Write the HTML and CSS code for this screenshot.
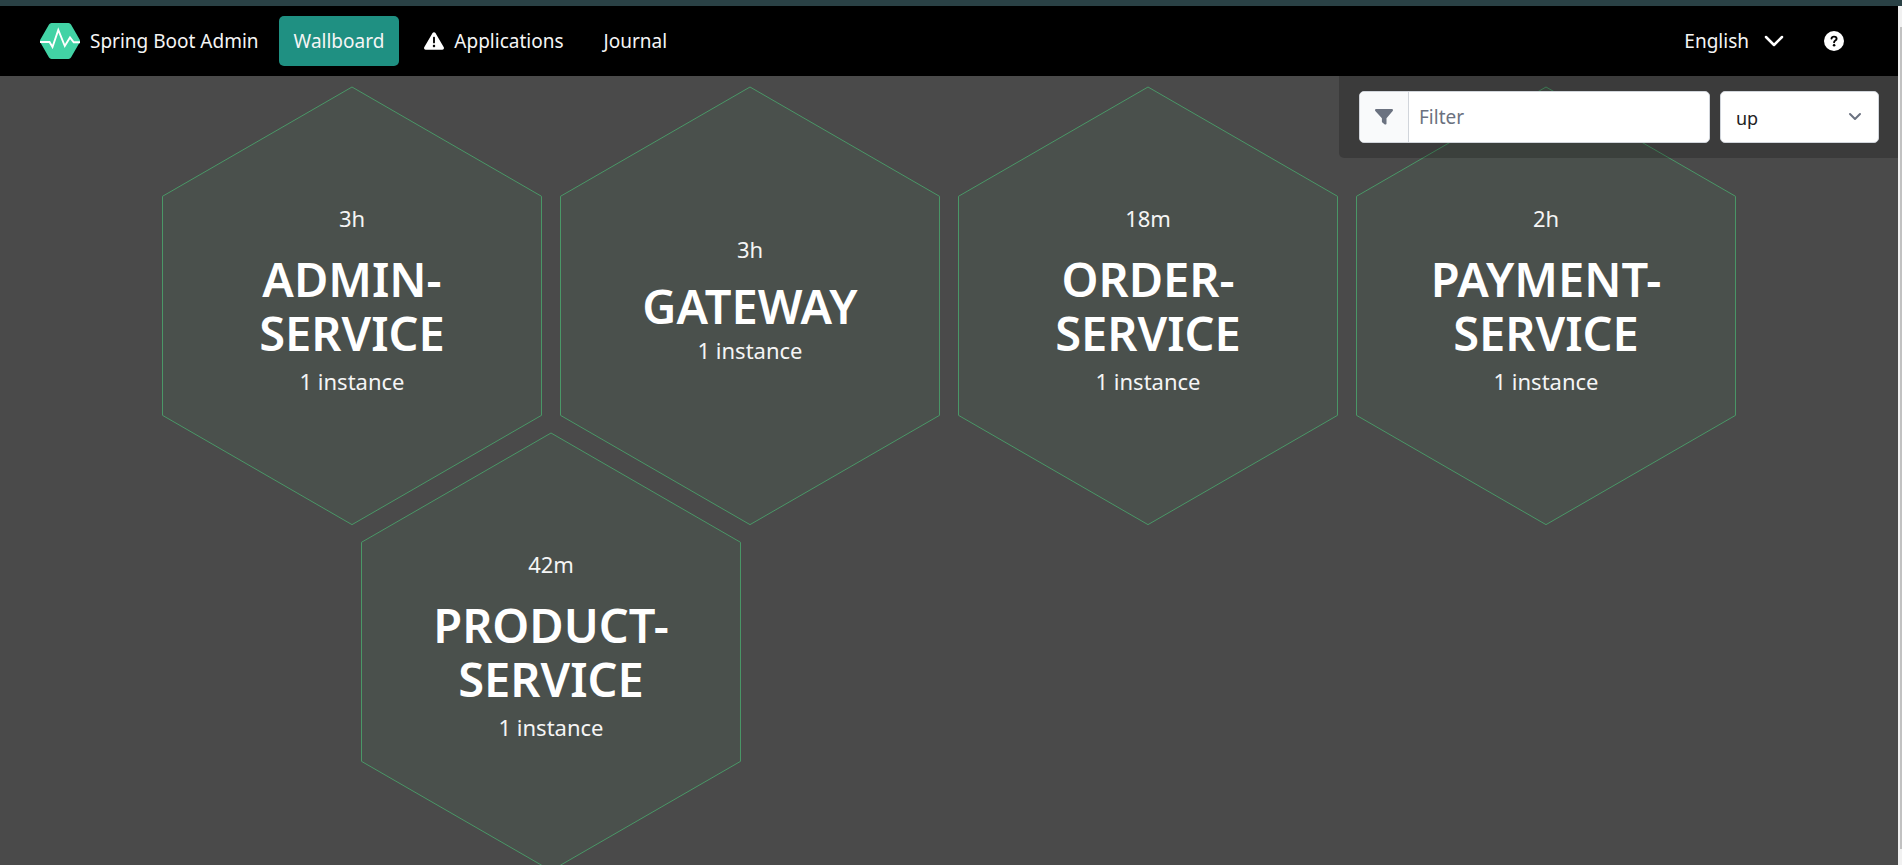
FILE: index.html
```html
<!DOCTYPE html>
<html lang="en">
<head>
<meta charset="utf-8">
<title>Spring Boot Admin</title>
<link rel="stylesheet" href="styles.css">
</head>
<body>
<svg class="defs" aria-hidden="true">
  <symbol id="hexagon" viewBox="0 0 379 438"><path d="M189.500 1 378.500 110V328.500L189.500 437.500 .5 328.500V110Z" vector-effect="non-scaling-stroke"/></symbol>
</svg>
<div class="window">
  <div class="page">
    <header class="navbar">
      <a class="brand" href="#">
        <svg class="brand-logo" viewBox="0 0 40 36" aria-hidden="true">
          <path d="M11.500 0h17a3 3 0 0 1 2.500 1.500l8.600 15a3 3 0 0 1 0 3l-8.600 15a3 3 0 0 1-2.500 1.500h-17A3 3 0 0 1 9 34.500l-8.600-15a3 3 0 0 1 0-3L9 1.500A3 3 0 0 1 11.500 0Z" fill="#42d3a5"/>
          <path d="M0 19h9.500l3 5L18.300 7l6.500 16 5.200-8.500 3.700 4.800H40" fill="none" stroke="#fff" stroke-width="1.900"/>
        </svg>
        <span>Spring Boot Admin</span>
      </a>
      <nav class="menu">
        <a class="menu-item menu-item--active" href="#">Wallboard</a>
        <a class="menu-item" href="#">
          <svg class="icon" viewBox="0 0 512 512" aria-hidden="true"><path fill="currentColor" d="M506.300 417 293 53c-16.300-28-57.700-28-74 0L5.800 417c-16.400 27.900 4.200 63 36.900 63h426.600c32.700 0 53.300-35 37-63ZM232 168c0-13.300 10.700-24 24-24s24 10.700 24 24v128c0 13.300-10.700 24-24 24s-24-10.700-24-24V168Zm24 248c-17.400 0-31.400-14-31.400-31.400s14-31.400 31.400-31.400 31.400 14 31.400 31.400S273.400 416 256 416Z"/></svg>
          <span>Applications</span>
        </a>
        <a class="menu-item" href="#">Journal</a>
      </nav>
      <div class="menu menu--end">
        <button class="menu-item menu-item--language" type="button">
          <span>English</span>
          <svg class="icon" viewBox="0 0 20 20" aria-hidden="true"><path d="m2 6 8 8 8-8" fill="none" stroke="currentColor" stroke-width="2.500" stroke-linecap="round" stroke-linejoin="round"/></svg>
        </button>
        <a class="menu-item" href="#" aria-label="Help">
          <svg class="icon" viewBox="0 0 20 20" aria-hidden="true"><circle cx="10" cy="10" r="10" fill="currentColor"/><path d="M7.500 7.600C7.700 6.300 8.700 5.600 10 5.600c1.500 0 2.600.8 2.600 2.100 0 1.900-2.500 1.800-2.500 3.500" fill="none" stroke="#000" stroke-width="1.900" stroke-linecap="round"/><circle cx="10.100" cy="14.200" r="1.300"/></svg>
        </a>
      </div>
    </header>
    <main class="wallboard">
      <form class="filters">
        <div class="search">
          <label class="search-label" for="filter" aria-label="Filter">
            <svg class="search-icon" viewBox="0 0 18 16" aria-hidden="true"><path d="M1.200 0h15.600c1 0 1.500 1.200.9 2L11.500 9.300v5.300c0 .9-1 1.300-1.700.8l-2.400-1.800a1 1 0 0 1-.5-.9V9.300L.3 2C-.3 1.200.2 0 1.200 0Z" fill="currentColor"/></svg>
          </label>
          <input class="search-input" id="filter" type="text" placeholder="Filter">
        </div>
        <select class="status" aria-label="Status">
          <option>up</option>
        </select>
        <svg class="status-arrow" viewBox="0 0 14 10" aria-hidden="true"><path d="m2 2 5 5 5-5" fill="none" stroke="currentColor" stroke-width="2" stroke-linecap="round" stroke-linejoin="round"/></svg>
      </form>
      <div class="hexes">
        <article class="hex">
          <svg class="hex-shape" aria-hidden="true"><use href="#hexagon"/></svg>
          <div class="hex-body"><span class="hex-time">3h</span><h1 class="hex-name hex-name--wrapped">ADMIN-SERVICE</h1><span class="hex-count">1 instance</span></div>
        </article>
        <article class="hex">
          <svg class="hex-shape" aria-hidden="true"><use href="#hexagon"/></svg>
          <div class="hex-body"><span class="hex-time">3h</span><h1 class="hex-name">GATEWAY</h1><span class="hex-count">1 instance</span></div>
        </article>
        <article class="hex">
          <svg class="hex-shape" aria-hidden="true"><use href="#hexagon"/></svg>
          <div class="hex-body"><span class="hex-time">18m</span><h1 class="hex-name hex-name--wrapped">ORDER-SERVICE</h1><span class="hex-count">1 instance</span></div>
        </article>
        <article class="hex">
          <svg class="hex-shape" aria-hidden="true"><use href="#hexagon"/></svg>
          <div class="hex-body"><span class="hex-time">2h</span><h1 class="hex-name hex-name--wrapped">PAYMENT-SERVICE</h1><span class="hex-count">1 instance</span></div>
        </article>
        <article class="hex hex--shifted">
          <svg class="hex-shape" aria-hidden="true"><use href="#hexagon"/></svg>
          <div class="hex-body"><span class="hex-time">42m</span><h1 class="hex-name hex-name--wrapped">PRODUCT-SERVICE</h1><span class="hex-count">1 instance</span></div>
        </article>
      </div>
    </main>
  </div>
  <div class="scrollbar"><div class="scrollbar-thumb"></div></div>
</div>
</body>
</html>
```
FILE: styles.css
```css
* { box-sizing: border-box; }

body {
  margin: 0;
  height: 100vh;
  overflow: hidden;
  border-top: 6px solid #2a4145;
  background: #4a4a4a;
  font-family: "Segoe UI", "Noto Sans", sans-serif;
  font-size: 19px;
  line-height: 30px;
  color: #f5f5f5;
}

.defs { display: none; }

.window { display: flex; height: 100%; }

.page {
  flex: 1;
  display: flex;
  flex-direction: column;
  min-width: 0;
  overflow: hidden;
}

.scrollbar {
  width: 4px;
  padding: 21px 0 16px 2px;
  background: #f1f1f1;
}
.scrollbar-thumb { height: 100%; background: #c1c1c1; }

/* Navigation */
.navbar {
  display: flex;
  align-items: center;
  gap: 20px;
  flex: none;
  padding: 10px 39px 10px 40px;
  background: #000;
}
.brand {
  display: flex;
  align-items: center;
  gap: 10px;
  color: inherit;
  text-decoration: none;
}
.brand-logo { width: 40px; height: 36px; }
.menu { display: flex; gap: 10px; }
.menu--end { margin-left: auto; }
.menu-item {
  display: flex;
  align-items: center;
  gap: 10px;
  padding: 10px 15px;
  border: 0;
  border-radius: 5px;
  background: none;
  font: inherit;
  color: inherit;
  text-decoration: none;
}
.menu-item--active { background: #1f9082; }
.menu-item--language { gap: 15px; }
.icon { width: 20px; height: 20px; color: #fff; }

/* Filter bar, floating over the hexagons */
.wallboard { position: relative; flex: 1; min-height: 0; }
.filters {
  position: absolute;
  top: 0;
  right: 0;
  z-index: 1;
  display: flex;
  align-items: center;
  gap: 10px;
  padding: 15px 19px 15px 20px;
  border-radius: 0 0 0 5px;
  background: rgba(0, 0, 0, .2);
}
.search {
  display: flex;
  height: 52px;
  border: 1px solid #d1d5db;
  border-radius: 5px;
  background: #fff;
  overflow: hidden;
}
.search-label {
  display: flex;
  align-items: center;
  padding: 0 15px;
  border-right: 1px solid #d1d5db;
  background: #f9fafb;
  color: #6b7280;
}
.search-icon { width: 18px; height: 16px; }
.search-input {
  width: 300px;
  padding: 0 10px;
  border: 0;
  background: none;
  font: inherit;
  color: #000;
}
.search-input::placeholder { color: #6b7280; }
.status {
  appearance: none;
  width: 159px;
  height: 52px;
  padding: 2px 15px 0;
  border: 1px solid #d1d5db;
  border-radius: 5px;
  background: #fff;
  font: inherit;
  font-size: 18px;
  color: #222;
}
.status-arrow {
  position: absolute;
  right: 36px;
  width: 14px;
  height: 10px;
  color: #6b7280;
  pointer-events: none;
}

/* Honeycomb */
.hexes {
  display: grid;
  grid-template-columns: repeat(8, 1fr);
  width: 84%;
  max-width: 1592px;
  margin: 0 auto;
  padding-top: 10px;
}
.hex {
  grid-column: span 2;
  display: grid;
  margin: 0 9px -23.5%;
}
.hex--shifted { grid-column: 2 / span 2; }
.hex-shape {
  grid-area: 1 / 1;
  width: 100%;
  aspect-ratio: 379 / 438;
  fill: rgba(72, 199, 116, .05);
  stroke: #4a9767;
  stroke-width: 1;
}
.hex-body {
  grid-area: 1 / 1;
  display: flex;
  flex-direction: column;
  justify-content: center;
  padding: 0 48px 12px;
  text-align: center;
  font-size: 22px;
}
.hex-name {
  margin: 15px 0 2px;
  font-size: 47px;
  font-weight: 600;
  line-height: 54px;
  color: #fff;
}
.hex-name--wrapped { padding: 4px 0; }
```
